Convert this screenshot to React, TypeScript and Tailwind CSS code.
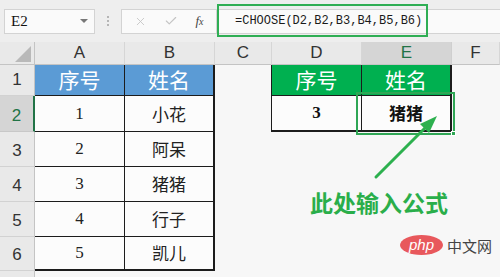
import { X, Check } from 'lucide-react';

const cjk = "font-['Noto_Sans_CJK_SC',sans-serif]";

type Row = { no: string; name: string };

const people: Row[] = [
  { no: '1', name: '小花' },
  { no: '2', name: '阿呆' },
  { no: '3', name: '猪猪' },
  { no: '4', name: '行子' },
  { no: '5', name: '凯儿' },
];

function RowHead({ n, active }: { n: string; active?: boolean }) {
  return (
    <div
      className={
        active
          ? "flex items-end justify-center pb-[3px] bg-[#d5d5d5] border-r-2 border-r-[#217346] border-b border-b-[#c8c8c8] text-[#217346] text-[17px] font-['Liberation_Sans',sans-serif]"
          : "flex items-end justify-center pb-[3px] bg-[#e9e9e9] border-r border-r-[#c4c4c4] border-b border-b-[#d2d2d2] text-[#333] text-[17px] font-['Liberation_Sans',sans-serif]"
      }
    >
      {n}
    </div>
  );
}

function ColHead({ l, active }: { l: string; active?: boolean }) {
  return (
    <div
      className={
        active
          ? "flex items-center justify-center bg-[#d5d5d5] border-r border-r-[#cfcfcf] border-b border-b-[#c4c4c4] text-[#217346] text-[17px] font-['Liberation_Sans',sans-serif]"
          : "flex items-center justify-center bg-[#e9e9e9] border-r border-r-[#d6d6d6] border-b border-b-[#c4c4c4] text-[#333] text-[17px] font-['Liberation_Sans',sans-serif]"
      }
    >
      {l}
    </div>
  );
}

export default function App() {
  return (
    <div className="relative w-[500px] h-[277px] overflow-hidden bg-[#f7f7f7]">
      {/* toolbar */}
      <div className="flex items-center h-[42px] bg-[#eeeeee]">
        <div className="ml-[4px] flex items-center justify-between w-[91px] h-[25px] px-[6px] bg-[#fafafa] border border-[#d3d3d3]">
          <span className="text-[15px] text-[#111] font-['Liberation_Serif',serif]">E2</span>
          <span className="w-0 h-0 border-l-[4px] border-r-[4px] border-t-[4px] border-l-transparent border-r-transparent border-t-[#777]" />
        </div>
        <div className="ml-[12px] flex flex-col gap-[2px]">
          <span className="w-[2px] h-[2px] bg-[#b5b5b5]" />
          <span className="w-[2px] h-[2px] bg-[#b5b5b5]" />
          <span className="w-[2px] h-[2px] bg-[#b5b5b5]" />
        </div>
        <div className="ml-[12px] flex items-center justify-around w-[95px] h-[25px] bg-[#fafafa] border border-[#d3d3d3] border-r-0 px-[4px]">
          <X className="w-[13px] h-[13px] text-[#c4c4c4]" strokeWidth={1.6} />
          <Check className="w-[14px] h-[14px] text-[#c4c4c4]" strokeWidth={2} />
          <span className="text-[13px] italic text-[#444] font-['Liberation_Serif',serif]">
            f<span className="text-[10px]">x</span>
          </span>
        </div>
        <div className="flex-1 flex items-center h-[25px] pl-[18px] bg-[#fafafa] border border-[#d3d3d3] border-r-0">
          <span className="text-[12px] text-[#1a1a1a] font-['Liberation_Mono',monospace]">=CHOOSE(D2,B2,B3,B4,B5,B6)</span>
        </div>
      </div>

      {/* sheet */}
      <div className="grid grid-cols-[35px_90px_90px_57px_90px_90px_1fr] grid-rows-[23px_31px_36px_35px_35px_35px_34px_1fr] h-[235px]">
        <div className="flex items-end justify-end pr-[3px] pb-[2px] bg-[#e9e9e9] border-r border-r-[#c4c4c4] border-b border-b-[#c4c4c4]">
          <svg width="16" height="16" viewBox="0 0 16 16">
            <polygon points="16,0 16,16 0,16" fill="#b9b9b9" />
          </svg>
        </div>
        <ColHead l="A" />
        <ColHead l="B" />
        <ColHead l="C" />
        <ColHead l="D" />
        <ColHead l="E" active />
        <ColHead l="F" />

        {/* row 1 */}
        <RowHead n="1" />
        <div className={`flex items-center justify-center bg-[#5b9bd5] border-r border-b border-[#1c1c1c] text-white text-[21px] ${cjk}`}>序号</div>
        <div className={`flex items-center justify-center bg-[#5b9bd5] border-r-2 border-b border-[#1c1c1c] text-white text-[21px] ${cjk}`}>姓名</div>
        <div className="border-r border-[#1c1c1c]" />
        <div className={`flex items-center justify-center bg-[#00b050] border-r border-b border-[#1c1c1c] text-white text-[21px] ${cjk}`}>序号</div>
        <div className={`flex items-center justify-center bg-[#00b050] border-r-2 border-b border-[#1c1c1c] text-white text-[21px] ${cjk}`}>姓名</div>
        <div />

        {/* rows 2..6 */}
        {people.map((p, i) => (
          <div key={p.no} className="contents">
            <RowHead n={String(i + 2)} active={i === 0} />
            <div
              className={
                i === 4
                  ? "flex items-center justify-center bg-[#fcfcfc] border-r border-b-2 border-[#1c1c1c] text-[17px] text-[#222] font-['Liberation_Serif',serif]"
                  : "flex items-center justify-center bg-[#fcfcfc] border-r border-b border-[#1c1c1c] text-[17px] text-[#222] font-['Liberation_Serif',serif]"
              }
            >
              {p.no}
            </div>
            <div
              className={
                i === 4
                  ? `flex items-center justify-center bg-[#fcfcfc] border-r-2 border-b-2 border-[#1c1c1c] text-[17px] text-[#222] ${cjk}`
                  : `flex items-center justify-center bg-[#fcfcfc] border-r-2 border-b border-[#1c1c1c] text-[17px] text-[#222] ${cjk}`
              }
            >
              {p.name}
            </div>
            {i === 0 ? (
              <>
                <div className="border-r border-[#1c1c1c]" />
                <div className="flex items-center justify-center bg-[#fcfcfc] border-r border-b-2 border-[#1c1c1c] text-[17px] font-bold text-[#111] font-['Liberation_Serif',serif]">3</div>
                <div className={`flex items-center justify-center bg-[#fcfcfc] border-r-2 border-b-2 border-[#1c1c1c] text-[17px] font-bold text-[#111] ${cjk}`}>猪猪</div>
                <div />
              </>
            ) : (
              <>
                <div />
                <div />
                <div />
                <div />
              </>
            )}
          </div>
        ))}

        {/* row 7 */}
        <div className="bg-[#e9e9e9] border-r border-r-[#c4c4c4]" />
        <div className="col-span-6" />
      </div>

      {/* formula annotation box */}
      <div className="absolute left-[217px] top-[4px] w-[211px] h-[33px] border-2 border-[#2fae54]" />

      {/* E2 selection */}
      <div className="absolute left-[356px] top-[92px] w-[99px] h-[43px] border-2 border-[#2fa655]">
        <span className="absolute -right-[3px] -bottom-[3px] w-[5px] h-[5px] bg-[#2fa655] border border-white" />
      </div>

      {/* arrow */}
      <svg className="absolute left-0 top-0" width="500" height="277" viewBox="0 0 500 277">
        <line x1="376" y1="177" x2="428" y2="125" stroke="#2db04f" strokeWidth="3" strokeLinecap="round" />
        <polygon points="437,116 420,124 429,133" fill="#2db04f" />
      </svg>

      {/* annotation text */}
      <div className={`absolute left-[310px] top-[188px] text-[23px] leading-[28px] font-bold text-[#2aae4a] ${cjk}`}>
        此处输入公式
      </div>

      {/* watermark */}
      <div className="absolute left-[400px] top-[235px] flex items-center gap-[4px]">
        <div className="flex items-center justify-center w-[43px] h-[20px] rounded-[50%] bg-[#e8585c]">
          <span className="text-[15px] leading-none italic text-white font-['Liberation_Sans',sans-serif] -mt-[2px]">php</span>
        </div>
        <span className={`text-[15px] leading-none text-[#444] ${cjk}`}>中文网</span>
      </div>
    </div>
  );
}
